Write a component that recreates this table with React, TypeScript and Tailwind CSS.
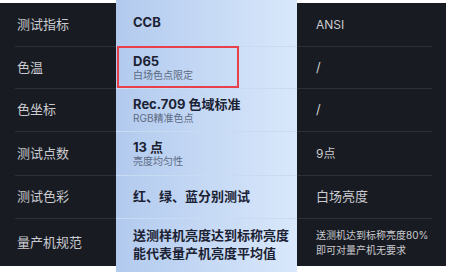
import React from "react";

const font = { fontFamily: 'Inter, "Noto Sans CJK SC", sans-serif' };

const leftRows = ["测试指标", "色温", "色坐标", "测试点数", "测试色彩", "量产机规范"];
const heights = ["h-[44px]", "h-[42px]", "h-[43px]", "h-[44px]", "h-[43px]", "h-[47px]"];

export default function App() {
  return (
    <div className="w-[453px] h-[272px] bg-white overflow-hidden" style={font}>
      <div className="mt-[3px] w-[446px] h-[263px] bg-[#191b22] flex">
        {/* left column */}
        <div className="w-[116px] flex flex-col">
          {leftRows.map((t, i) => (
            <div
              key={t}
              className={`${heights[i]} ml-[15px] flex items-center pl-[2px] text-[13px] text-[#c9cbd0] ${
                i < 5 ? "border-b border-[#2d3038]" : ""
              }`}
            >
              {t}
            </div>
          ))}
        </div>

        {/* middle column */}
        <div className="w-[181px] -mt-[3px] h-[272px] bg-gradient-to-r from-[#b2caee] to-[#d9e8fb] flex flex-col text-[#1b2233]">
          <div className="h-[47px] border-b border-[#c9dbf3] flex items-center pl-[17px]">
            <span className="text-[13px] font-bold">CCB</span>
          </div>
          <div className="h-[42px] border-b border-[#c9dbf3] flex flex-col justify-center pl-[17px] relative">
            <div className="absolute left-[1px] top-[-1px] w-[122px] h-[42px] border-2 border-[#e8404a]" />
            <span className="text-[13px] font-bold leading-[16px]">D65</span>
            <span className="text-[10px] leading-[13px] text-[#5c6a82]">白场色点限定</span>
          </div>
          <div className="h-[43px] border-b border-[#c9dbf3] flex flex-col justify-center pl-[17px]">
            <span className="text-[13px] font-bold leading-[16px]">Rec.709 色域标准</span>
            <span className="text-[10px] leading-[13px] text-[#5c6a82]">RGB精准色点</span>
          </div>
          <div className="h-[44px] border-b border-[#c9dbf3] flex flex-col justify-center pl-[17px]">
            <span className="text-[13px] font-bold leading-[16px]">13 点</span>
            <span className="text-[10px] leading-[13px] text-[#5c6a82]">亮度均匀性</span>
          </div>
          <div className="h-[43px] border-b border-[#c9dbf3] flex items-center pl-[17px]">
            <span className="text-[13px] font-bold">红、绿、蓝分别测试</span>
          </div>
          <div className="flex-1 flex flex-col justify-center pl-[17px] pb-[4px]">
            <span className="text-[13px] font-bold leading-[18px]">送测样机亮度达到标称亮度</span>
            <span className="text-[13px] font-bold leading-[18px]">能代表量产机亮度平均值</span>
          </div>
        </div>

        {/* right column */}
        <div className="w-[149px] flex flex-col pr-[14px] text-[#c9cbd0]">
          <div className="h-[44px] border-b border-[#2d3038] flex items-center pl-[19px] text-[12px]">ANSI</div>
          <div className="h-[42px] border-b border-[#2d3038] flex items-center pl-[19px] text-[13px]">/</div>
          <div className="h-[43px] border-b border-[#2d3038] flex items-center pl-[19px] text-[13px]">/</div>
          <div className="h-[44px] border-b border-[#2d3038] flex items-center pl-[19px] text-[12px]">9点</div>
          <div className="h-[43px] border-b border-[#2d3038] flex items-center pl-[19px] text-[13px]">白场亮度</div>
          <div className="h-[47px] flex flex-col justify-center pl-[19px] text-[10px] leading-[15px]">
            <span>送测机达到标称亮度80%</span>
            <span>即可对量产机无要求</span>
          </div>
        </div>
      </div>
    </div>
  );
}
